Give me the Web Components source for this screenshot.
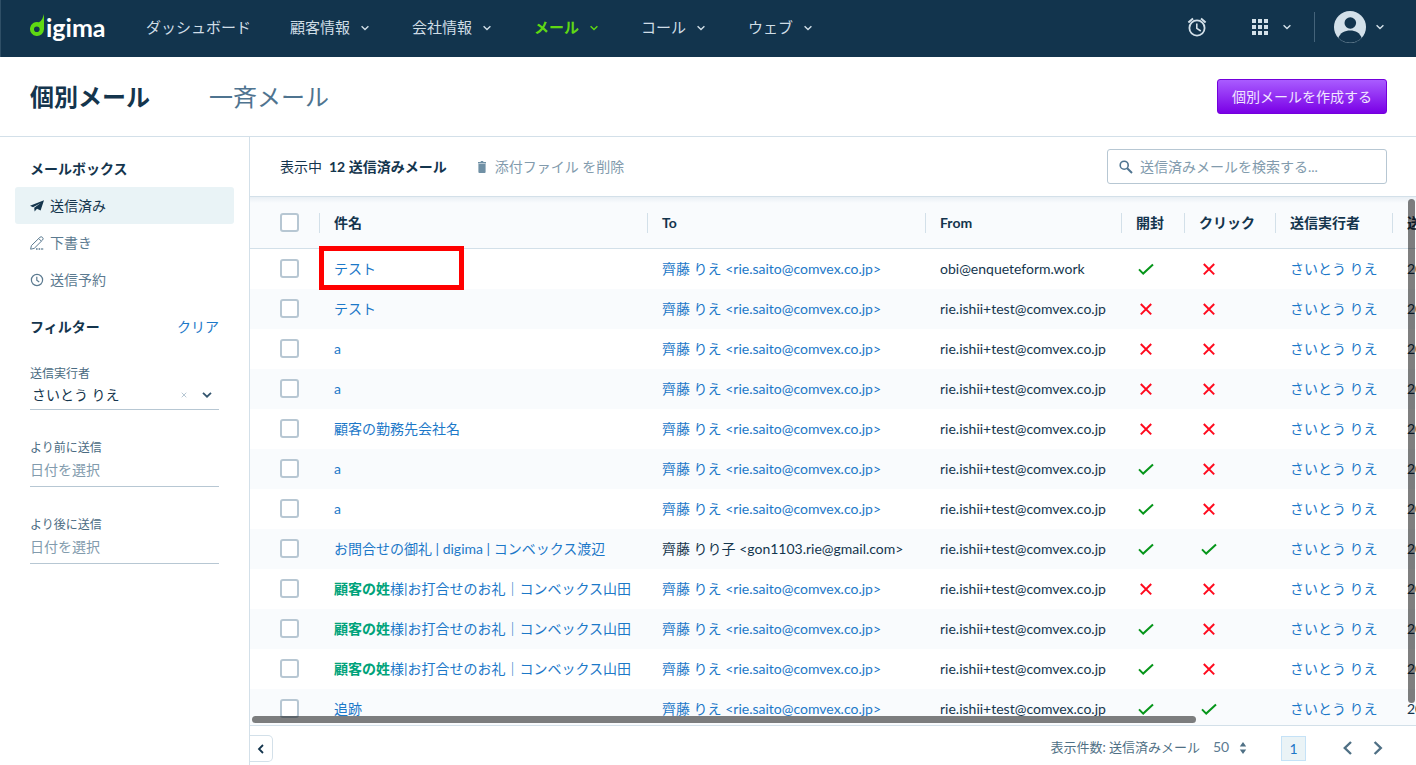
<!DOCTYPE html>
<html lang="ja">
<head>
<meta charset="utf-8">
<meta name="viewport" content="width=device-width, initial-scale=1">
<title>digima - 個別メール</title>
<style>
  :root {
    --ink: #14354d;
    --muted: #5b7a90;
    --soft: #829bad;
    --link: #1c78c8;
    --line: #d3e0e9;
    --control: #b7c7d3;
    --tint: #eaf3f6;
    --stripe: #f9fbfd;
  }
  body {
    margin: 0;
    font: 14px/20px Lato, "Noto Sans CJK JP", sans-serif;
    color: var(--ink);
    background: #fff;
  }
</style>
</head>
<body>
<mail-app></mail-app>

<script>
class BaseElement extends HTMLElement {
  connectedCallback() {
    if (this.shadowRoot) return;
    this.attachShadow({ mode: 'open' }).innerHTML =
      '<style>*{box-sizing:border-box}button,input,select{font:inherit;color:inherit;margin:0}' +
      'a{text-decoration:none;color:inherit}</style>' + this.render();
  }
}

const ICONS = {
  down: ['0 0 12 12', '<path d="M2.600 4.200 6 7.600l3.400-3.400" fill="none" stroke="currentColor" stroke-width="1.400"/>'],
  downBold: ['0 0 12 12', '<path d="M2 3.800 6 7.700l4-3.900" fill="none" stroke="currentColor" stroke-width="1.800"/>'],
  left: ['0 0 16 16', '<path d="M12 2 5.800 8 12 14" fill="none" stroke="currentColor" stroke-width="2.400"/>'],
  right: ['0 0 16 16', '<path d="M4.600 2l6.200 6-6.200 6" fill="none" stroke="currentColor" stroke-width="2.400"/>'],
  collapse: ['0 0 12 12', '<path d="M8 2 4 6l4 4" fill="none" stroke="currentColor" stroke-width="1.800"/>'],
  alarm: ['0 0 20 20', '<g fill="none" stroke="currentColor" stroke-width="1.800"><circle cx="10" cy="11" r="7.600"/><path d="M9.800 6.600v4.800l4 2.600" stroke-width="1.600"/><path d="M1.400 5.400 6 1.600M18.600 5.400 14 1.600" stroke-width="2"/></g>'],
  grid: ['0 0 16 16', '<path fill="currentColor" d="M0 0h4v4H0zM6 0h4v4H6zM12 0h4v4h-4zM0 6h4v4H0zM6 6h4v4H6zM12 6h4v4h-4zM0 12h4v4H0zM6 12h4v4H6zM12 12h4v4h-4z"/>'],
  user: ['0 0 32 32', '<circle cx="16" cy="16" r="16" fill="currentColor"/><circle cx="16.300" cy="12" r="5.800" fill="#12344d"/><path d="M4.400 27C6 22 11 19.600 16.200 19.600S26 22 27.600 27A16.400 16.400 0 0 1 4.400 27z" fill="#12344d"/><path d="M6 28.600a16 16 0 0 0 20 0" fill="none" stroke="#3b5a70" stroke-width="1" stroke-dasharray="3 2"/>'],
  plane: ['0 0 14 14', '<path fill="currentColor" d="M0 6.800 14 1.200 10.600 11.400 7 9.700 4.600 12.400 4.200 8.800 10.800 4 3 8.200z"/>'],
  pencil: ['0 0 14 14', '<g fill="none" stroke="currentColor" stroke-width="1"><path d="M.6 13.200l.8-3.600 8.400-8.200a1.800 1.800 0 0 1 2.700 2.700L4.200 12.400zM8.800 2.600l2.500 2.500"/><path d="M6 13h8" stroke-width="1.400" stroke-dasharray="1.600 1"/></g>'],
  clock: ['0 0 14 14', '<circle cx="7" cy="7" r="5.600" fill="none" stroke="currentColor" stroke-width="1.200"/><path d="M6.800 3.800v3.500l2.400 1.700" fill="none" stroke="currentColor" stroke-width="1.200"/>'],
  trash: ['0 0 10 12', '<path fill="currentColor" d="M1 1h2.500L4 0h2l.5 1H9v1.400H1zM1.400 3h7.200v8a1 1 0 0 1-1 1H2.400a1 1 0 0 1-1-1z"/>'],
  search: ['0 0 14 14', '<circle cx="5.200" cy="5.200" r="4" fill="none" stroke="currentColor" stroke-width="1.600"/><path d="M8.200 8.200 13 13" stroke="currentColor" stroke-width="2"/>'],
  check: ['0 0 20 20', '<path d="M3 10.400l4.200 4.200L17 5.400" fill="none" stroke="#06961a" stroke-width="2"/>'],
  cross: ['0 0 20 20', '<path d="M4.800 5l10.400 10.400M15.200 5 4.800 15.400" fill="none" stroke="#ff0a1e" stroke-width="2"/>'],
  clear: ['0 0 6 6', '<path d="M.7.7l4.600 4.600M5.300.7.7 5.300" stroke="currentColor" stroke-width="1"/>'],
  sort: ['0 0 8 12', '<path fill="currentColor" d="M4 0l3.200 4.600H.8zM4 12l3.200-4.600H.8z"/>'],
  mark: ['0 0 15 24', '<path fill="#5fd813" d="M14 0v15a7 7 0 1 1-5.200-6.800C11.600 7.400 12.800 4 14 0z"/><circle cx="6.800" cy="15.200" r="2.800" fill="#12344d"/>']
};
customElements.define('ui-icon', class extends BaseElement {
  render() {
    const [box, body] = ICONS[this.getAttribute('name')];
    const [, , w, h] = box.split(' ');
    return `<style>:host{display:inline-block;flex:none;width:${w}px;height:${h}px}svg{display:block}</style>
      <svg viewBox="${box}" width="${w}" height="${h}" aria-hidden="true">${body}</svg>`;
  }
});

customElements.define('nav-item', class extends BaseElement {
  render() {
    return `<style>
      :host{display:block;font-size:15px;line-height:24px;color:#cfdde6;white-space:nowrap}
      :host([active]){color:#5fd813;font-weight:700}
      a{display:flex;align-items:center}
      ui-icon{margin:1px 2px 0 9px}
    </style><a href="#"><slot></slot>${this.hasAttribute('menu') ? '<ui-icon name="down"></ui-icon>' : ''}</a>`;
  }
});

customElements.define('app-header', class extends BaseElement {
  render() {
    return `<style>
      :host{display:flex;align-items:center;justify-content:space-between;height:57px;flex:none;padding:0 30px 3px 29px;
        box-sizing:border-box;background:#12344d;color:#d3e0e9;border-left:1px solid #2f4f66}
      .logo{display:flex;align-items:center;width:77px;margin-right:39px;color:#fff;font-weight:700;font-size:25px;line-height:32px}
      .logo ui-icon{margin:0 1px 3px 0}
      nav,.tools,.left{display:flex;align-items:center}
      nav{gap:39px}
      button{display:flex;align-items:center;border:0;padding:0;background:none;cursor:pointer}
      .apps{margin:0 21px 0 45px;gap:13px}
      .me{gap:8px}
      .rule{width:1px;height:30px;background:#44637a;margin-right:19px}
    </style>
    <div class="left">
      <a class="logo" href="#"><ui-icon name="mark"></ui-icon><span>igima</span></a>
      <nav>
        <nav-item>ダッシュボード</nav-item>
        <nav-item menu>顧客情報</nav-item>
        <nav-item menu>会社情報</nav-item>
        <nav-item menu active>メール</nav-item>
        <nav-item menu>コール</nav-item>
        <nav-item menu>ウェブ</nav-item>
      </nav>
    </div>
    <div class="tools">
      <button aria-label="通知"><ui-icon name="alarm"></ui-icon></button>
      <button class="apps" aria-label="アプリ"><ui-icon name="grid"></ui-icon><ui-icon name="down"></ui-icon></button>
      <span class="rule"></span>
      <button class="me" aria-label="アカウント"><ui-icon name="user"></ui-icon><ui-icon name="down"></ui-icon></button>
    </div>`;
  }
});

customElements.define('page-heading', class extends BaseElement {
  render() {
    return `<style>
      :host{display:flex;align-items:center;justify-content:space-between;flex:none;height:80px;padding:0 29px 0 30px;
        box-sizing:border-box;border-bottom:1px solid var(--line)}
      .tabs{display:flex;gap:59px;font-size:24px;line-height:32px}
      h1{margin:0;font:inherit;font-weight:700}
      .tabs a{color:#4f7490}
      button{height:35px;padding:0 14px;border:1px solid #7400dc;border-radius:3px;color:#f1e6ff;cursor:pointer;
        background:linear-gradient(#a95cff,#7a00e6)}
    </style>
    <div class="tabs"><h1>個別メール</h1><a href="#">一斉メール</a></div>
    <button>個別メールを作成する</button>`;
  }
});

customElements.define('mailbox-link', class extends BaseElement {
  render() {
    return `<style>
      :host{display:block;color:var(--muted)}
      a{display:flex;align-items:center;gap:6px;height:37px;padding:0 15px;border-radius:3px}
      :host([active]){color:var(--ink)}
      :host([active]) a{background:#e9f3f6}
    </style><a href="#"><ui-icon name="${this.getAttribute('icon')}"></ui-icon><span><slot></slot></span></a>`;
  }
});

customElements.define('filter-field', class extends BaseElement {
  render() {
    const label = this.getAttribute('label');
    const value = this.getAttribute('value');
    const control = value
      ? `<div class="pick"><select id="f"><option>${value}</option></select>
         <ui-icon class="x" name="clear"></ui-icon><ui-icon name="downBold"></ui-icon></div>`
      : '<input id="f" type="text" placeholder="日付を選択">';
    return `<style>
      :host{display:block}
      label{display:block;font-size:12px;line-height:20px;color:#4a6b82}
      input,.pick{display:flex;align-items:center;width:100%;border:0;border-bottom:1px solid var(--control);background:none}
      input{height:29px;padding:0 0 5px;outline:0}
      input::placeholder{color:var(--soft);opacity:1}
      .pick{height:26px;padding:0 6px 4px 2px;color:#34566f}
      select{appearance:none;flex:1;min-width:0;height:20px;border:0;padding:0;background:none;color:var(--ink)}
      .x{margin-right:14px;color:#b7c7d3}
    </style><label for="f">${label}</label>${control}`;
  }
});

customElements.define('mail-sidebar', class extends BaseElement {
  render() {
    return `<style>
      :host{display:block;box-sizing:border-box;flex:none;width:250px;padding:22px 15px;border-right:1px solid var(--line)}
      h2{margin:0;font-size:14px;line-height:20px}
      h2.box{padding:0 15px;margin-bottom:8px}
      .filters{display:flex;flex-direction:column;gap:28px;padding:0 15px;margin-top:19px}
      .head{display:flex;justify-content:space-between;margin-bottom:-1px}
      .head a{color:var(--link)}
    </style>
    <h2 class="box">メールボックス</h2>
    <mailbox-link icon="plane" active>送信済み</mailbox-link>
    <mailbox-link icon="pencil">下書き</mailbox-link>
    <mailbox-link icon="clock">送信予約</mailbox-link>
    <div class="filters">
      <div class="head"><h2>フィルター</h2><a href="#">クリア</a></div>
      <filter-field label="送信実行者" value="さいとう りえ"></filter-field>
      <filter-field label="より前に送信"></filter-field>
      <filter-field label="より後に送信"></filter-field>
    </div>`;
  }
});

customElements.define('list-toolbar', class extends BaseElement {
  render() {
    return `<style>
      :host{display:flex;align-items:center;justify-content:space-between;flex:none;height:60px;padding:0 29px 0 30px;
        box-sizing:border-box;border-bottom:1px solid var(--line)}
      .info{display:flex;align-items:center}
      b{margin:0 30px 0 7px}
      button{display:flex;align-items:center;gap:8px;border:0;padding:0;background:none;color:var(--soft)}
      .search{display:flex;align-items:center;width:280px;height:35px;padding:0 11px;gap:7px;border:1px solid var(--control);
        border-radius:3px;color:#4f7490}
      input{flex:1;min-width:0;border:0;padding:0;outline:0;background:none}
      input::placeholder{color:var(--soft);opacity:1}
      button ui-icon{color:#7090a5}
    </style>
    <div class="info"><span>表示中</span><b>12 送信済みメール</b>
      <button><ui-icon name="trash"></ui-icon><span>添付ファイル を削除</span></button></div>
    <label class="search"><ui-icon name="search"></ui-icon><input type="search" aria-label="検索" placeholder="送信済みメールを検索する..."></label>`;
  }
});

/* Outlined frame that highlights one cell of the list. */
customElements.define('cell-frame', class extends BaseElement {
  render() {
    return `<style>:host{position:absolute;top:-3px;left:0;width:145px;height:44px;box-sizing:border-box;border:5px solid #f00;pointer-events:none}</style>`;
  }
});

const SAITO = ['齊藤 りえ <rie.saito@comvex.co.jp>', true];
const TEST = 'rie.ishii+test@comvex.co.jp';
const MERGE = '<b>顧客の姓</b>様|お打合せのお礼｜コンベックス山田';
const MAILS = [
  ['テスト', SAITO, 'obi@enqueteform.work', 1, 0],
  ['テスト', SAITO, TEST, 0, 0],
  ['a', SAITO, TEST, 0, 0],
  ['a', SAITO, TEST, 0, 0],
  ['顧客の勤務先会社名', SAITO, TEST, 0, 0],
  ['a', SAITO, TEST, 1, 0],
  ['a', SAITO, TEST, 1, 0],
  ['お問合せの御礼 | digima | コンベックス渡辺', ['齊藤 りり子 <gon1103.rie@gmail.com>', false], TEST, 1, 1],
  [MERGE, SAITO, TEST, 0, 0],
  [MERGE, SAITO, TEST, 1, 0],
  [MERGE, SAITO, TEST, 1, 0],
  ['追跡', SAITO, TEST, 1, 1]
];

customElements.define('mail-table', class extends BaseElement {
  render() {
    const esc = s => s.replace('<', '&lt;').replace('>', '&gt;');
    const flag = on => `<ui-icon name="${on ? 'check' : 'cross'}"></ui-icon>`;
    const rows = MAILS.map(([subject, [to, linked], from, opened, clicked], i) => `<tr>
      <td class="sel"><input type="checkbox" aria-label="選択 ${i + 1}"></td>
      <td><a href="#">${subject}</a>${i === 0 ? '<cell-frame></cell-frame>' : ''}</td>
      <td>${linked ? `<a href="#">${esc(to)}</a>` : esc(to)}</td>
      <td>${from}</td><td>${flag(opened)}</td><td>${flag(clicked)}</td>
      <td><a href="#">さいとう りえ</a></td><td>20</td></tr>`).join('');
    const heads = ['件名', 'To', 'From', '開封', 'クリック', '送信実行者', '送']
      .map(t => `<th scope="col"><span>${t}</span></th>`).join('');
    return `<style>
      :host{display:block;position:relative;flex:1;min-height:0}
      .scroll{height:100%;overflow:auto;scrollbar-width:none}
      table{border-collapse:separate;border-spacing:0;table-layout:fixed;width:1500px;white-space:nowrap}
      th{height:52px;padding:0;text-align:left;background:linear-gradient(#e9eff4,var(--stripe) 6px);border-bottom:1px solid var(--line)}
      th span{display:block;padding-left:14px;border-left:1px solid var(--line)}
      td{height:40px;padding:0 0 0 15px;position:relative}
      th.sel,td.sel{padding-left:30px}
      td.sel{padding-bottom:2px}
      tbody tr:nth-child(even){background:var(--stripe)}
      td a{color:var(--link)}
      td b{color:#00a37a}
      ui-icon{display:block}
      input{appearance:none;display:block;width:19px;height:19px;border:2px solid var(--control);border-radius:3px;background:#fff}
      .bar{position:absolute;border-radius:4px;background:rgba(0,0,0,.5);z-index:2}
      .x{left:2px;bottom:2px;height:7px;width:81%}
      .y{right:1px;top:2px;width:7px;height:calc(100% - 24px)}
    </style>
    <div class="scroll"><table>
      <colgroup><col style="width:69px"><col style="width:328px"><col style="width:278px"><col style="width:196px"><col style="width:63px"><col style="width:91px"><col style="width:117px"><col></colgroup>
      <thead><tr><th class="sel"><input type="checkbox" aria-label="すべて選択"></th>${heads}</tr></thead>
      <tbody>${rows}</tbody>
    </table></div>
    <div class="bar x"></div><div class="bar y"></div>`;
  }
});

customElements.define('list-footer', class extends BaseElement {
  render() {
    return `<style>
      :host{display:flex;box-sizing:border-box;align-items:center;flex:none;height:40px;padding:5px 30px 0 0;border-top:1px solid var(--line);color:#4f7085}
      button{display:flex;align-items:center;justify-content:center;border:0;padding:0;background:none}
      .fold{width:23px;height:27px;border:1px solid var(--line);border-left:0;border-radius:0 5px 5px 0;color:var(--ink);margin:1px auto 0 0}
      label{font-size:13px;margin:0 13px 3px 0}
      select{appearance:none;border:0;padding:0;background:none;width:26px;height:20px;margin-bottom:2px;color:#5b7a90}
      .page{display:block;width:25px;height:25px;border:1px solid #c5e2f7;background:var(--tint);color:var(--link);
        line-height:23px;text-align:center;margin:0 33px 0 34px}
      .step{width:16px;height:16px}
      .next{margin-left:15px}
    </style>
    <button class="fold" aria-label="サイドバーを閉じる"><ui-icon name="collapse"></ui-icon></button>
    <label for="size">表示件数: 送信済みメール</label>
    <select id="size"><option>50</option></select><ui-icon name="sort"></ui-icon>
    <a class="page" href="#">1</a>
    <button class="step" aria-label="前へ"><ui-icon name="left"></ui-icon></button>
    <button class="step next" aria-label="次へ"><ui-icon name="right"></ui-icon></button>`;
  }
});

customElements.define('mail-app', class extends BaseElement {
  render() {
    return `<style>
      :host{display:flex;flex-direction:column;height:100vh;overflow:hidden}
      .body{display:flex;flex:1;min-height:0}
      main{display:flex;flex-direction:column;flex:1;min-width:0}
    </style>
    <app-header></app-header>
    <page-heading></page-heading>
    <div class="body">
      <mail-sidebar></mail-sidebar>
      <main><list-toolbar></list-toolbar><mail-table></mail-table><list-footer></list-footer></main>
    </div>`;
  }
});
</script>
</body>
</html>
